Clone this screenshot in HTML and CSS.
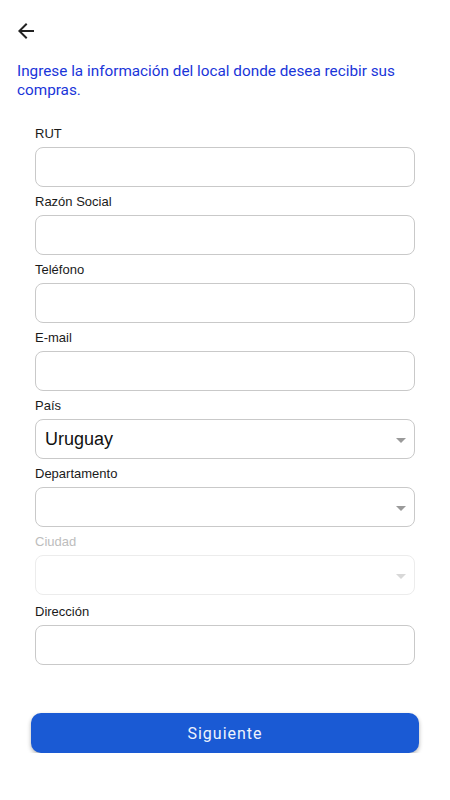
FILE: index.html
```html
<!DOCTYPE html>
<html lang="es">
<head>
<meta charset="utf-8">
<title>Datos del local</title>
<link rel="stylesheet" href="styles.css">
</head>
<body>
<div class="page">
  <header class="topbar">
    <button class="back" aria-label="Volver">
      <svg width="24" height="24" viewBox="0 0 24 24"><path d="M20 11H7.83l5.59-5.59L12 4l-8 8 8 8 1.41-1.41L7.83 13H20v-2z" fill="#222"/></svg>
    </button>
  </header>
  <p class="intro">Ingrese la información del local donde desea recibir sus compras.</p>
  <form class="form">
    <div class="field"><label>RUT</label><div class="box"></div></div>
    <div class="field"><label>Razón Social</label><div class="box"></div></div>
    <div class="field"><label>Teléfono</label><div class="box"></div></div>
    <div class="field"><label>E-mail</label><div class="box"></div></div>
    <div class="field"><label>País</label><div class="box select"><span class="value">Uruguay</span><span class="caret"></span></div></div>
    <div class="field"><label>Departamento</label><div class="box select"><span class="value"></span><span class="caret"></span></div></div>
    <div class="field disabled"><label>Ciudad</label><div class="box select"><span class="value"></span><span class="caret"></span></div></div>
    <div class="field last"><label>Dirección</label><div class="box"></div></div>
  </form>
  <div class="actions">
    <button class="primary" type="button">Siguiente</button>
  </div>
</div>
</body>
</html>
```
FILE: styles.css
```css
html, body { margin: 0; padding: 0; background: #fff; }
body { font-family: "Liberation Sans", Arial, sans-serif; }
.page { width: 450px; }
.topbar { height: 62px; display: flex; align-items: flex-start; }
.back {
  margin: 19px 0 0 14px; padding: 0; border: 0; background: none;
  width: 24px; height: 24px; display: block;
}
.back svg { display: block; }
.intro {
  margin: 0; padding: 0 17px;
  font-family: Roboto, sans-serif; font-size: 15.3px; line-height: 19px;
  color: #1a35d9;
}
.form {
  padding: 26px 35px 0 35px;
  display: flex; flex-direction: column; gap: 7px;
}
.field { display: flex; flex-direction: column; gap: 5px; }
.field.disabled { margin-bottom: 1px; }
.field.last { margin-top: 1px; }
.field label {
  font-size: 13px; line-height: 16px; color: #1a1a1a;
}
.box {
  box-sizing: border-box; height: 40px; width: 380px;
  border: 1px solid #c9c9c9; border-radius: 8px; background: #fff;
}
.select {
  display: flex; align-items: center; justify-content: space-between;
  padding: 0 8px 0 9px;
}
.select .value { font-size: 18px; color: #111; }
.caret {
  width: 0; height: 0;
  border-left: 5px solid transparent; border-right: 5px solid transparent;
  border-top: 5px solid #9a9a9a;
  margin-top: 2px;
}
.disabled label { color: #bdbdbd; }
.disabled .box { border-color: #ececec; }
.disabled .caret { border-top-color: #d8d8d8; }
.actions { padding: 48px 31px 0 31px; }
.primary {
  display: block; width: 388px; height: 40px; border: 0; border-radius: 10px;
  background: #1a5ad4; color: #eef2fd;
  font-family: Roboto, sans-serif; font-size: 16px; letter-spacing: 1px;
  box-shadow: 0 2px 4px rgba(0,0,0,0.3);
}
```
